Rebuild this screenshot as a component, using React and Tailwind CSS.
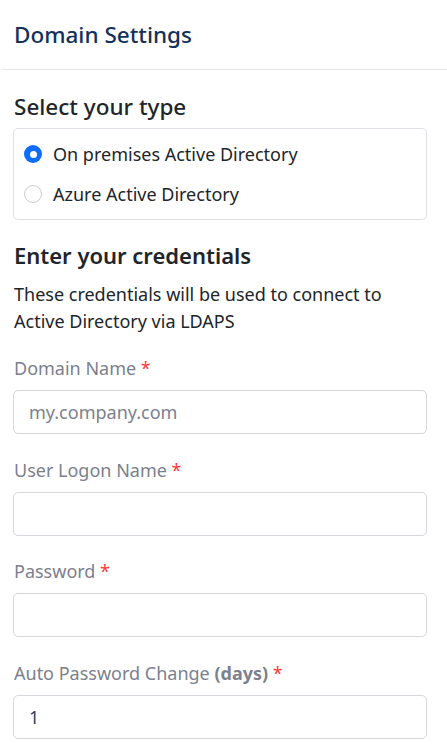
const fields = [
  { label: 'Domain Name', placeholder: 'my.company.com', value: '' },
  { label: 'User Logon Name', placeholder: '', value: '' },
  { label: 'Password', placeholder: '', value: '' },
  { label: 'Auto Password Change', suffix: '(days)', placeholder: '', value: '1' },
]

function Radio({ checked, label }) {
  return (
    <label className="flex items-center gap-[11px] h-[40px]">
      {checked ? (
        <span className="w-[18px] h-[18px] rounded-full bg-[#0d6efd] flex items-center justify-center">
          <span className="w-[7px] h-[7px] rounded-full bg-white" />
        </span>
      ) : (
        <span className="w-[18px] h-[18px] rounded-full border border-[#c9cdd2] bg-white" />
      )}
      <span className="text-[18px] text-[#212529]">{label}</span>
    </label>
  )
}

export default function App() {
  return (
    <div className="w-[447px] min-h-[753px] bg-white" style={{ fontFamily: '"Noto Sans", "Open Sans", sans-serif' }}>
      {/* Header */}
      <header className="h-[70px] flex items-center px-[14px] border-b border-[#e3e5e8] ml-[2px]">
        <h1 className="text-[22.5px] font-medium text-[#13315c] -ml-[2px]">Domain Settings</h1>
      </header>

      <main className="pl-[13px] pr-[20px]">
        <h2 className="text-[22.5px] font-medium text-[#212529] mt-[21px] mb-[5px] leading-[32px] pl-[1px]">Select your type</h2>
        <div className="border border-[#dee2e6] rounded-[5px] px-[10px] py-[5px]">
          <Radio checked label="On premises Active Directory" />
          <Radio label="Azure Active Directory" />
        </div>

        <h2 className="text-[22px] font-semibold text-[#212529] mt-[19px] leading-[32px] pl-[1px]">Enter your credentials</h2>
        <p className="text-[18px] text-[#212529] leading-[27px] mt-[10px] pl-[1px]">
          These credentials will be used to connect to Active Directory via LDAPS
        </p>

        <div className="mt-[21px] flex flex-col gap-[23.6px]">
          {fields.map((f) => (
            <div key={f.label}>
              <div className="text-[18px] text-[#7c7f8d] leading-[25px] mb-[9px] pl-[1px]">
                {f.label}
                {f.suffix && <span className="font-bold"> {f.suffix}</span>}
                <span className="text-[#ff3b3b]"> *</span>
              </div>
              <input
                readOnly
                value={f.value}
                placeholder={f.placeholder}
                className="w-full h-[44px] border border-[#d4d7db] rounded-[5px] px-[15px] text-[18px] text-[#34435a] placeholder:text-[#7c7f8d] outline-none"
              />
            </div>
          ))}
        </div>
      </main>
    </div>
  )
}
